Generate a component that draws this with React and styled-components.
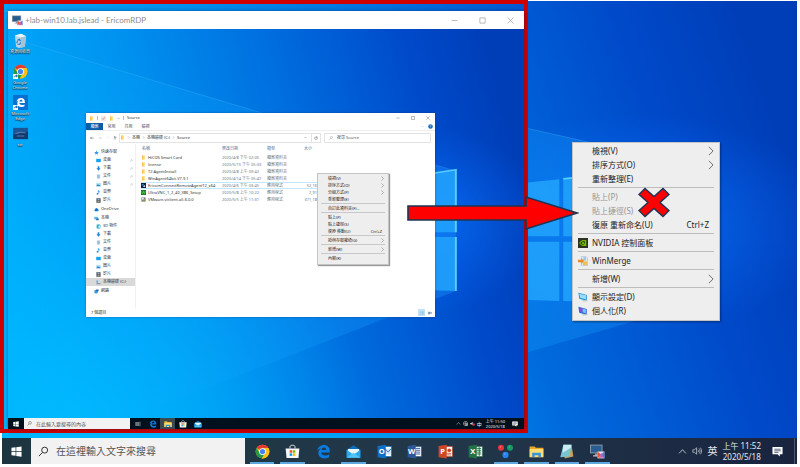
import React, { useId } from "react";
import styled, { createGlobalStyle, css } from "styled-components";

const files = [
  { icon: "folder", name: "HiCOS Smart Card", date: "2020/4/8 下午 02:05", type: "檔案資料夾", size: "" },
  { icon: "folder", name: "license", date: "2020/5/15 下午 05:33", type: "檔案資料夾", size: "" },
  { icon: "folder", name: "T2 AgentInstall", date: "2020/4/8 上午 09:42", type: "檔案資料夾", size: "" },
  { icon: "folder", name: "WinAgent64bit-V7.9.1", date: "2020/4/14 下午 05:47", type: "檔案資料夾", size: "" },
  { icon: "ericom", name: "EricomConnectRemoteAgentT2_x64", date: "2020/4/6 下午 03:45", type: "應用程式", size: "52,16", active: true },
  { icon: "vnc", name: "UltraVNC_1_2_40_X86_Setup", date: "2020/5/8 上午 10:22", type: "應用程式", size: "2,91" },
  { icon: "vmware", name: "VMware-viclient-all-6.0.0", date: "2020/5/5 上午 11:31", type: "應用程式", size: "371,18" },
];

const places = [
  [
    { icon: "star", name: "快速存取", root: true },
    { icon: "desktop", name: "桌面", pin: true },
    { icon: "download", name: "下載", pin: true },
    { icon: "doc", name: "文件", pin: true },
    { icon: "picture", name: "圖片", pin: true },
    { icon: "music", name: "音樂" },
    { icon: "video", name: "影片" },
  ],
  [{ icon: "cloud", name: "OneDrive", root: true }],
  [
    { icon: "pc", name: "本機", root: true },
    { icon: "cube", name: "3D 物件" },
    { icon: "download", name: "下載" },
    { icon: "doc", name: "文件" },
    { icon: "music", name: "音樂" },
    { icon: "desktop", name: "桌面" },
    { icon: "picture", name: "圖片" },
    { icon: "video", name: "影片" },
    { icon: "drive", name: "本機磁碟 (C:)", selected: true },
  ],
  [{ icon: "network", name: "網路", root: true }],
];

const folderMenu = [
  [{ text: "檢視(V)", sub: true }, { text: "排序方式(O)", sub: true }, { text: "分組方式(P)", sub: true }, { text: "重新整理(E)" }],
  [{ text: "自訂此資料夾(F)..." }],
  [{ text: "貼上(P)" }, { text: "貼上捷徑(S)" }, { text: "復原 移動(U)", keys: "Ctrl+Z" }],
  [{ text: "授與存取權給(G)", sub: true }],
  [{ text: "新增(W)", sub: true }],
  [{ text: "內容(R)" }],
];

const desktopMenu = [
  [{ text: "檢視(V)", sub: true }, { text: "排序方式(O)", sub: true }, { text: "重新整理(E)" }],
  [{ text: "貼上(P)", off: true }, { text: "貼上捷徑(S)", off: true }, { text: "復原 重新命名(U)", keys: "Ctrl+Z" }],
  [{ text: "NVIDIA 控制面板", icon: "nvidia" }],
  [{ text: "WinMerge", icon: "merge" }],
  [{ text: "新增(W)", sub: true }],
  [{ text: "顯示設定(D)", icon: "display" }, { text: "個人化(R)", icon: "personal" }],
];

const apps = [
  { icon: "chrome", open: true },
  { icon: "store", open: true },
  { icon: "edge" },
  { icon: "mail", open: true },
  { icon: "outlook" },
  { icon: "word" },
  { icon: "ppt" },
  { icon: "excel" },
  { icon: "dots", open: true },
  { icon: "explorer", open: true },
  { icon: "notepad", open: true },
  { icon: "rdp", open: true },
];

const shortcuts = [
  { icon: "bin", label: "資源回收筒" },
  { icon: "chromeLink", label: "Google Chrome" },
  { icon: "edgeLink", label: "Microsoft Edge" },
  { icon: "photo", label: "tst" },
];

const chrome = (
  <>
    <circle cx="12" cy="12" r="11" fill="#fbc116" />
    <path d="M12 12 2.5 6.5A11 11 0 0 1 21.5 6.5L12 7z" fill="#e33b2e" />
    <path d="M2.5 6.5A11 11 0 0 0 11 23l5-8.500-4 2.500-4.500-2.500z" fill="#279847" />
    <path d="M12 6.500h9.500A11 11 0 0 1 11 23l5.500-9z" fill="#fbc116" />
    <circle cx="12" cy="12" r="5.400" fill="#fff" />
    <circle cx="12" cy="12" r="4.200" fill="#4384f3" />
  </>
);
const edgeE = "M2 11C3 5 7 1.500 12.500 1.500c6 0 9.500 4 9.500 9.500v2.500H8.500c.3 3.500 3 4.800 6.500 4.800 2.300 0 4.300-.6 6-1.600v4.500c-2 1.200-4.400 1.800-7.200 1.800C7.500 23 3.700 19.500 3.700 14.500c0-3.200 1.600-5.800 4.300-7.300-2.600.4-4.600 1.700-6 3.800zm6.700-1.500h7.600c0-2.500-1.300-3.900-3.600-3.900-2.200 0-3.600 1.500-4 3.900z";
const linkBadge = (
  <>
    <path d="M0 16h8v8H0z" fill="#fff" />
    <path d="M2 22c0-3 1-4 3-4v-1.500L8 19l-3 2.500V20c-1.500 0-2 .5-3 2z" fill="#1767b8" />
  </>
);
const Office = ({ color, letter, children }) => (
  <>
    <path d="M12 4h11v16H12z" fill="#fff" stroke={color} />
    {children}
    <path d="M1 3 14 1v22L1 21z" fill={color} />
    <text x="7.500" y="16.500" textAnchor="middle" fontSize="12" fontWeight="700" fontFamily="Open Sans, sans-serif" fill="#fff">{letter}</text>
  </>
);

const art = {
  chrome,
  chromeLink: <>{chrome}{linkBadge}</>,
  edge: <path d={edgeE} fill="#0a7be0" />,
  edgeLink: (
    <>
      <path d="M0 0h24v24H0z" fill="#0870d0" />
      <path d={edgeE} fill="#fff" transform="translate(4.500 4) scale(.66)" />
      {linkBadge}
    </>
  ),
  store: (
    <>
      <path d="M8 7V4.500C8 3 9 2 12 2s4 1 4 2.500V7" fill="none" stroke="#eee" strokeWidth="1.500" />
      <path d="M1 7h22l-1.500 15.500h-19z" fill="#f7f7f7" />
      <path d="M7.500 10h4v4h-4z" fill="#f05022" />
      <path d="M12.500 10h4v4h-4z" fill="#7eb900" />
      <path d="M7.500 15h4v4h-4z" fill="#00a3ee" />
      <path d="M12.500 15h4v4h-4z" fill="#ffb800" />
    </>
  ),
  mail: (
    <>
      <path d="M1 9 12 2l11 7v13H1z" fill="#0a6dbd" />
      <path d="M3 8h18v9H3z" fill="#e9f6fd" />
      <path d="M1 9l11 8 11-8v13H1z" fill="#2aa8ea" />
      <path d="M1 22 12 14l11 8z" fill="#50c5f5" />
    </>
  ),
  outlook: (
    <Office color="#0e6fc4" letter="O">
      <path d="M13 7h9v10h-9z" fill="#d7e9f8" />
      <path d="m13 8 5 5 4-5" fill="none" stroke="#0e6fc4" strokeWidth="1.500" />
    </Office>
  ),
  word: (
    <Office color="#2b579a" letter="W">
      <path d="M14 7h7M14 10h7M14 13h7M14 16h7" stroke="#2b579a" strokeWidth="1.500" />
    </Office>
  ),
  ppt: (
    <Office color="#d04524" letter="P">
      <circle cx="18" cy="10" r="3" fill="#d04524" />
      <path d="M14 15h7M14 17.500h7" stroke="#d04524" strokeWidth="1.300" />
    </Office>
  ),
  excel: (
    <Office color="#217346" letter="X">
      <path d="M14 7h7M14 10h7M14 13h7M14 16h7M18 5v14" stroke="#217346" strokeWidth="1.500" />
    </Office>
  ),
  dots: (
    <>
      <circle cx="4.800" cy="6" r="4.800" fill="#e8323c" />
      <circle cx="19.200" cy="6" r="4.800" fill="#159a63" />
      <circle cx="12" cy="17.500" r="5" fill="#2684ee" />
      <circle cx="4" cy="4.800" r="1.300" fill="#ff7d7d" />
      <circle cx="18.400" cy="4.800" r="1.200" fill="#4cc795" />
      <circle cx="11.200" cy="16" r="1.300" fill="#6cb0ff" />
    </>
  ),
  explorer: (
    <>
      <path d="M1 4h8l2 2h12v15H1z" fill="#e9a924" />
      <path d="M1 8h22v13H1z" fill="#ffdc72" />
      <path d="M5 21v-7h14v7h-4v-3H9v3z" fill="#3c94d8" />
    </>
  ),
  notepad: (
    <>
      <path d="M8 2h12l3 18-14 3z" fill="#c7a259" />
      <path d="M7 1h13l-3 19-15 1z" fill="#7cc4d2" />
      <path d="M7 1h13l-1 5-13 8z" fill="#c9edf2" />
    </>
  ),
  rdp: (
    <>
      <path d="M0 1h20v14H0z" fill="#8d9aa5" />
      <path d="M1.500 2.500h17v11h-17z" fill="#2a5d8f" />
      <path d="M8 15h5v4H8z" fill="#8b969e" />
      <path d="M5 18h10v2H5z" fill="#c3cbd0" />
      <path d="M12 12h11v11H12z" fill="#e9e2ec" />
      <path d="M12 12l6 5-6 6z" fill="#e4572e" />
      <path d="M23 12l-6 5 6 6z" fill="#4f78d8" />
      <path d="M14 22l4-8 4 8z" fill="#c764b4" />
    </>
  ),
  bin: (
    <>
      <path d="M3 4 13 1l8 4-2 17-10 2-4-2z" fill="#c9dbe6" opacity=".9" />
      <path d="M3 4l9 3 9-2-8-4z" fill="#eef5f9" />
      <path d="M12 7l9-2-2 17-7 2z" fill="#a5c3d6" />
      <path d="M7 12l3-2 2 3M12 15l-1 3H7M6 16l1-3" fill="none" stroke="#1876d1" strokeWidth="1.800" />
    </>
  ),
  photo: (
    <>
      <path d="M0 3h24v18H0z" fill="#123a70" />
      <path d="M0 3h24v6L0 14z" fill="#1c5593" />
      <path d="M4 12l8-2 8 1M6 16h12" stroke="#6f90b8" strokeWidth="1.200" fill="none" />
    </>
  ),
  folder: (
    <>
      <path d="M6 2h12v20H6z" fill="#ffd866" />
      <path d="M6 2h4v20H6z" fill="#f1b93c" />
    </>
  ),
  ericom: (
    <>
      <path d="M0 0h24v24H0z" fill="#0c2340" />
      <path d="M4 5h9v7H4z" fill="#3c89cf" />
      <path d="M8 17l10-8 3 10z" fill="#d8e6f1" />
    </>
  ),
  vnc: (
    <>
      <path d="M0 0h24v24H0z" fill="#1f7a2d" />
      <path d="M4 6l4 12 4-12 4 12 4-12" stroke="#5cd54e" strokeWidth="3" fill="none" />
    </>
  ),
  vmware: (
    <>
      <path d="M2 2h20v20H2z" fill="#6b7b88" />
      <path d="M5 4h9v9H5z" fill="#e3e8ec" />
      <path d="M9 10h11v11H9z" fill="#d9b13a" />
      <path d="M12 13h6v5h-6z" fill="#3970a5" />
    </>
  ),
  star: <path d="M12 2l3 7 8 1-6 5 2 8-7-4-7 4 2-8-6-5 8-1z" fill="#2f9bea" />,
  desktop: <path d="M1 4h22v16H1z" fill="#18a0f3" />,
  download: <path d="M8 1h8v10h6L12 23 2 11h6z" fill="#2387d8" />,
  doc: (
    <>
      <path d="M4 1h16v22H4z" fill="#c9d9e5" />
      <path d="M7 7h10M7 12h10M7 17h10" stroke="#4a90c4" strokeWidth="2" />
    </>
  ),
  picture: (
    <>
      <path d="M1 4h22v16H1z" fill="#b7dff5" />
      <path d="M1 20l8-10 6 6 3-3 5 7z" fill="#2a86cc" />
    </>
  ),
  music: <path d="M9 1h3c1 5 7 5 7 11h-3c0-3-2-4-4-5v11c0 6-9 6-9 1 0-4 4-5 6-4z" fill="#1b8fe6" />,
  video: (
    <>
      <path d="M2 1h20v22H2z" fill="#44505e" />
      <path d="M7 3h10v8H7z" fill="#8fa9c9" />
      <path d="M7 13h10v8H7z" fill="#b69f73" />
    </>
  ),
  cloud: <path d="M5 20a5 5 0 0 1 0-9 7 7 0 0 1 13-2 6 6 0 0 1 1 11z" fill="#0f78d4" />,
  pc: (
    <>
      <path d="M1 4h18v12H1z" fill="#57b8ef" />
      <path d="M12 12h11v8H9z" fill="#2b74ae" />
    </>
  ),
  cube: (
    <>
      <path d="M3 4l9-3 9 3v16l-9 3-9-3z" fill="#22b3c4" />
      <path d="M12 8l7-2v11l-7 3z" fill="#dff7fa" />
    </>
  ),
  drive: (
    <>
      <path d="M2 3h8v9H2z" fill="#35a9ea" />
      <path d="M2 16h20v4H2z" fill="#6b7680" />
    </>
  ),
  network: (
    <>
      <circle cx="10" cy="13" r="9" fill="#3a9ad9" />
      <path d="M11 2h11v9H11z" fill="#1f6eb0" />
    </>
  ),
  nvidia: (
    <>
      <path d="M0 0h24v24H0z" fill="#2c3325" />
      <path d="M3 12c3-6 8-7 11-7h6v14h-7c-4 0-8-3-10-7z" fill="#76b900" />
      <path d="M6 12c2-4 6-5 10-4 1 3 0 7-4 8-3 0-5-2-6-4z" fill="#22300f" />
      <circle cx="12" cy="12" r="2.500" fill="#8ad100" />
    </>
  ),
  merge: (
    <>
      <path d="M8 1h11l4 4v18H8z" fill="#dcebf6" stroke="#7ba7c8" />
      <path d="M13 3h6v8h-6z" fill="#9cc3e0" />
      <path d="M0 9h8V5l7 7-7 7v-4H0z" fill="#e98a2b" />
      <path d="M12 13h10v9H12z" fill="#f2c14c" />
    </>
  ),
  display: (
    <>
      <path d="M1 2l20 5v14L3 16z" fill="#1f8fd0" />
      <path d="M3 4l16 4v10L5 14z" fill="#9bdcfa" />
      <path d="M9 20l13-1 1 3-10 1z" fill="#b8c6d0" />
    </>
  ),
  personal: (
    <>
      <path d="M1 2l20 5v14L3 16z" fill="#2a63d4" />
      <path d="M3 4l8 2v9l-6-1z" fill="#8a4be0" />
      <path d="M11 6l8 2v10l-8-3z" fill="#6fc3f6" />
      <path d="M9 20l13-1 1 3-10 1z" fill="#b8c6d0" />
    </>
  ),
  windows: <path d="M1 4l9-1.300v8.800H1zM11.500 2.500 23 1v10.500H11.500zM1 13h9v8.500L1 20.200zM11.500 13H23v10.300l-11.500-1.600z" fill="#fff" />,
  taskview: <path d="M3 4v3h12V4M3 20v-3h12v3M3 9h12v6H3zM20 3v18" fill="none" stroke="#ddd" strokeWidth="2" />,
  search: <path d="M21 9A6.500 6.500 0 1 1 8 9a6.500 6.500 0 0 1 13 0zM10 14 2 22" fill="none" stroke="currentColor" strokeWidth="2" />,
  up: <path d="M3 17l9-10 9 10" fill="none" stroke="currentColor" strokeWidth="2" />,
  down: <path d="M4 8l8 8 8-8" fill="none" stroke="currentColor" strokeWidth="2.500" />,
  right: <path d="M7 2l10 10L7 22" fill="none" stroke="currentColor" strokeWidth="2" />,
  goBack: <path d="M22 12H3M10 5l-7 7 7 7" fill="none" stroke="currentColor" strokeWidth="2.500" />,
  goNext: <path d="M2 12h19M14 5l7 7-7 7" fill="none" stroke="currentColor" strokeWidth="2.500" />,
  goUp: <path d="M12 22V3M5 10l7-7 7 7" fill="none" stroke="currentColor" strokeWidth="3" />,
  refresh: <path d="M18 7a8 8 0 1 1-9-2M17 1v7h-7" fill="none" stroke="currentColor" strokeWidth="2.500" />,
  speaker: <path d="M2 9h4l5-5v16l-5-5H2zM14 9c2 2 2 4 0 6M17 6c3 4 3 8 0 12M20 4c4 5 4 11 0 16" fill="none" stroke="currentColor" strokeWidth="1.500" />,
  mute: (
    <>
      <path d="M1 9h5l7-6v18l-7-6H1z" fill="#ccc" />
      <circle cx="18" cy="17" r="6" fill="#dc2f2f" />
    </>
  ),
  globe: (
    <>
      <circle cx="12" cy="12" r="10" fill="none" stroke="#ddd" strokeWidth="2.500" />
      <path d="M2 12h20M12 2v20M14 14h9v8h-9z" stroke="#ddd" strokeWidth="2" fill="#777" />
    </>
  ),
  note: (
    <>
      <path d="M1 2h22v16h-6v5l-5-5H1z" fill="#fff" />
      <path d="M5 7h14M5 10.500h14M5 14h9" stroke="#1b2a44" strokeWidth="1.500" />
    </>
  ),
  min: <path d="M2 12h20" stroke="currentColor" strokeWidth="2" />,
  max: <path d="M3 3h18v18H3z" fill="none" stroke="currentColor" strokeWidth="2" />,
  close: <path d="M2 2l20 20M22 2 2 22" stroke="currentColor" strokeWidth="2" />,
  pin: <path d="M13 3l8 8-4 1-4 5-6-6 5-4zM9 15l-6 6" fill="none" stroke="currentColor" strokeWidth="2" />,
  props: (
    <>
      <path d="M2 2h20v20H2z" fill="#f2eeee" stroke="#bbb" />
      <path d="M6 12l4 5 8-11" fill="none" stroke="#e2593f" strokeWidth="3" />
    </>
  ),
  help: (
    <>
      <circle cx="12" cy="12" r="11" fill="#0f6fc6" />
      <path d="M9 9c0-4 6-4 6 0 0 2-3 2-3 5M12 17v2" stroke="#fff" strokeWidth="2" fill="none" />
    </>
  ),
  details: <path d="M2 5h6M2 12h6M2 19h6M11 5h11M11 12h11M11 19h11" stroke="#6a9cb8" strokeWidth="3" />,
  tiles: <path d="M1 5h12v14H1zM15 6h8v4h-8zM15 14h8v4h-8z" fill="#6f93b4" />,
};

const Icon = ({ name, size }) => (
  <Glyph viewBox="0 0 24 24" $size={size} aria-hidden="true">
    {art[name]}
  </Glyph>
);

function Wallpaper() {
  const id = useId();
  return (
    <Scene viewBox="0 0 1000 1000" preserveAspectRatio="none" aria-hidden="true">
      <defs>
        <linearGradient id={`${id}sky`} x1="0" y1="0.6" x2="1" y2="0.4">
          <stop offset="0" stopColor="#00aefc" />
          <stop offset="0.3" stopColor="#0094f0" />
          <stop offset="0.58" stopColor="#0070e0" />
          <stop offset="0.85" stopColor="#004aca" />
          <stop offset="1" stopColor="#003eb8" />
        </linearGradient>
        <linearGradient id={`${id}beam`} x1="0" y1="0" x2="1" y2="0">
          <stop offset="0" stopColor="#00b4ff" stopOpacity="0.1" />
          <stop offset="1" stopColor="#1a98ff" stopOpacity="0.35" />
        </linearGradient>
        <radialGradient id={`${id}glow`} cx="0.8" cy="0.48" r="0.24">
          <stop offset="0" stopColor="#0a7cff" stopOpacity="0.7" />
          <stop offset="1" stopColor="#0a6cff" stopOpacity="0" />
        </radialGradient>
        <radialGradient id={`${id}low`} cx="0.1" cy="1" r="0.6">
          <stop offset="0" stopColor="#00bcff" stopOpacity="0.9" />
          <stop offset="1" stopColor="#00b4ff" stopOpacity="0" />
        </radialGradient>
      </defs>
      <path d="M0 0h1000v1000H0z" fill={`url(#${id}sky)`} />
      <path d="M0 0h1000v1000H0z" fill={`url(#${id}low)`} />
      <path d="M0 0h1000v1000H0z" fill={`url(#${id}glow)`} />
      <path d="M0 20 868 355V655L0 1090z" fill={`url(#${id}beam)`} />
      <path d="M0 20 868 355" stroke="#4dbdff" strokeOpacity="0.3" strokeWidth="2" />
      <path d="M560 410 701 385V508H560zM706 384 868 352V508H706zM560 520H701V648L560 640zM706 520H868V655L706 648z" fill="#26aaff" opacity="0.75" />
      <path d="M706 384 868 352V508M868 520V655" fill="none" stroke="#62dcff" strokeWidth="4" opacity="0.8" />
    </Scene>
  );
}

const Menu = ({ groups, compact, label }) => (
  <MenuBox role="menu" aria-label={label} $compact={compact}>
    {groups.map((group, i) => (
      <React.Fragment key={i}>
        {i > 0 && <MenuLine $compact={compact} />}
        {group.map((item) => (
          <MenuItem key={item.text} role="menuitem" disabled={item.off} $compact={compact}>
            <MenuIcon>{item.icon && <Icon name={item.icon} size={10} />}</MenuIcon>
            <span>{item.text}</span>
            {item.keys && <MenuKeys $compact={compact}>{item.keys}</MenuKeys>}
            {item.sub && <MenuArrow><Icon name="right" size={compact ? 5 : 10} /></MenuArrow>}
          </MenuItem>
        ))}
      </React.Fragment>
    ))}
  </MenuBox>
);

const Explorer = () => (
  <ExplorerWindow>
    <ExplorerTitle>
      <Icon name="folder" size={5} />
      <Divider />
      <Icon name="props" size={5} />
      <Icon name="folder" size={5} />
      <Icon name="down" size={3} />
      <Divider />
      <span>Source</span>
      <WindowButtons $gap={11}>
        <IconButton aria-label="最小化"><Icon name="min" size={4} /></IconButton>
        <IconButton aria-label="最大化"><Icon name="max" size={4} /></IconButton>
        <IconButton aria-label="關閉"><Icon name="close" size={4} /></IconButton>
      </WindowButtons>
    </ExplorerTitle>
    <Tabs>
      <Tab $active>檔案</Tab>
      <Tab>常用</Tab>
      <Tab>共用</Tab>
      <Tab>檢視</Tab>
      <TabsEnd>
        <Icon name="down" size={3} />
        <Icon name="help" size={5} />
      </TabsEnd>
    </Tabs>
    <AddressRow>
      <NavButtons>
        <IconButton aria-label="上一頁"><Icon name="goBack" size={4} /></IconButton>
        <IconButton aria-label="下一頁" $faint><Icon name="goNext" size={4} /></IconButton>
        <IconButton aria-label="最近" $faint><Icon name="down" size={3} /></IconButton>
        <IconButton aria-label="上移"><Icon name="goUp" size={4} /></IconButton>
      </NavButtons>
      <Address>
        <Icon name="folder" size={5} />
        <Icon name="right" size={3} />
        <Crumb>本機</Crumb>
        <Icon name="right" size={3} />
        <Crumb>本機磁碟 (C:)</Crumb>
        <Icon name="right" size={3} />
        <Crumb>Source</Crumb>
        <AddressEnd><Icon name="down" size={3} /></AddressEnd>
        <Refresh aria-label="重新整理"><Icon name="refresh" size={4} /></Refresh>
      </Address>
      <FolderSearch>
        <Icon name="search" size={4} />
        <SearchInput aria-label="搜尋 Source" placeholder="搜尋 Source" $size={4} />
      </FolderSearch>
    </AddressRow>
    <ExplorerBody>
      <Sidebar>
        {places.map((group, i) => (
          <div key={i}>
            {group.map((place) => (
              <Place key={place.name} $root={place.root} $selected={place.selected}>
                <Icon name={place.icon} size={5} />
                <span>{place.name}</span>
                {place.pin && <Pin><Icon name="pin" size={3} /></Pin>}
              </Place>
            ))}
          </div>
        ))}
      </Sidebar>
      <FileTable>
        <colgroup>
          <col width="81" />
          <col width="45" />
          <col width="37" />
          <col width="25" />
          <col />
        </colgroup>
        <thead>
          <tr>
            <th>名稱</th>
            <th>修改日期</th>
            <th>類型</th>
            <th>大小</th>
            <th />
          </tr>
        </thead>
        <tbody>
          {files.map((file) => (
            <FileRow key={file.name} $active={file.active}>
              <td>
                <FileName>
                  <Icon name={file.icon} size={5} />
                  {file.name}
                </FileName>
              </td>
              <td>{file.date}</td>
              <td>{file.type}</td>
              <SizeCell>{file.size}</SizeCell>
              <td />
            </FileRow>
          ))}
        </tbody>
      </FileTable>
    </ExplorerBody>
    <StatusBar>
      <span>7 個項目</span>
      <ViewSwitch>
        <ViewButton aria-label="詳細資料" $active><Icon name="details" size={4} /></ViewButton>
        <ViewButton aria-label="圖示"><Icon name="tiles" size={4} /></ViewButton>
      </ViewSwitch>
    </StatusBar>
    <FolderMenuSpot>
      <Menu groups={folderMenu} compact label="資料夾功能表" />
    </FolderMenuSpot>
  </ExplorerWindow>
);

const RemoteTaskbar = () => (
  <RemoteBar>
    <RemoteStart aria-label="開始"><Icon name="windows" size={6} /></RemoteStart>
    <RemoteSearch>
      <Icon name="search" size={5} />
      <SearchInput aria-label="搜尋" placeholder="在此輸入要搜尋的內容" $size={5} />
    </RemoteSearch>
    <RemoteApps>
      {["taskview", "edge", "explorer", "store", "mail"].map((name) => (
        <RemoteApp key={name} aria-label={name} $active={name === "explorer"}>
          <Icon name={name} size={name === "taskview" ? 6 : 8} />
        </RemoteApp>
      ))}
    </RemoteApps>
    <RemoteTray>
      <Icon name="up" size={5} />
      <Icon name="globe" size={5} />
      <Icon name="mute" size={5} />
      <span>中</span>
      <RemoteClock>
        <span>上午 11:50</span>
        <span>2020/5/18</span>
      </RemoteClock>
      <Icon name="note" size={6} />
    </RemoteTray>
  </RemoteBar>
);

export default function App() {
  return (
    <Page>
      <GlobalStyle />
      <Desktop>
        <Wallpaper />
        <DesktopArea />
        <Taskbar>
          <StartButton aria-label="開始"><Icon name="windows" size={11} /></StartButton>
          <TaskSearch>
            <Icon name="search" size={11} />
            <SearchInput aria-label="搜尋" placeholder="在這裡輸入文字來搜尋" $size={10} />
          </TaskSearch>
          <Apps>
            {apps.map((app) => (
              <AppButton key={app.icon} aria-label={app.icon} $open={app.open}>
                <Icon name={app.icon} size={15} />
              </AppButton>
            ))}
          </Apps>
          <Tray>
            <Icon name="up" size={9} />
            <Icon name="speaker" size={10} />
            <Lang>英</Lang>
            <Clock>
              <span>上午 11:52</span>
              <span>2020/5/18</span>
            </Clock>
            <Icon name="note" size={11} />
          </Tray>
          <ShowDesktop aria-label="顯示桌面" />
        </Taskbar>
      </Desktop>
      <Frame>
        <RemoteWindow>
          <RemoteTitle>
            <Icon name="rdp" size={11} />
            <span>+lab-win10.lab.jslead - EricomRDP</span>
            <WindowButtons $gap={21}>
              <IconButton aria-label="最小化"><Icon name="min" size={7} /></IconButton>
              <IconButton aria-label="最大化"><Icon name="max" size={7} /></IconButton>
              <IconButton aria-label="關閉"><Icon name="close" size={7} /></IconButton>
            </WindowButtons>
          </RemoteTitle>
          <RemoteScreen>
            <Wallpaper />
            <Shortcuts>
              {shortcuts.map((item) => (
                <Shortcut key={item.icon}>
                  <Icon name={item.icon} size={15} />
                  <span>{item.label}</span>
                </Shortcut>
              ))}
            </Shortcuts>
            <Explorer />
            <RemoteTaskbar />
          </RemoteScreen>
        </RemoteWindow>
      </Frame>
      <DesktopMenuSpot>
        <Menu groups={desktopMenu} label="桌面功能表" />
        <Cross viewBox="0 0 32 30" aria-hidden="true">
          <path d="M7 1 16 9 25 1 31 7 22 15 31 23 25 29 16 21 7 29 1 23 10 15 1 7z" />
        </Cross>
      </DesktopMenuSpot>
      <Arrow viewBox="0 0 172 36" aria-hidden="true">
        <path d="M1 11H119V2L170 18 119 34V25H1z" />
      </Arrow>
    </Page>
  );
}

const GlobalStyle = createGlobalStyle`
  * {
    box-sizing: border-box;
  }
  body {
    margin: 0;
    background: #fff;
    font-family: "Noto Sans", "Noto Sans CJK TC", sans-serif;
  }
  button, input {
    font: inherit;
    color: inherit;
    padding: 0;
    border: 0;
    background: none;
  }
`;

const Glyph = styled.svg`
  display: block;
  flex: none;
  width: ${(p) => p.$size}px;
  height: ${(p) => p.$size}px;
`;

const Scene = styled.svg`
  position: absolute;
  inset: 0;
  width: 100%;
  height: 100%;
  z-index: -1;
`;

const Page = styled.div`
  position: relative;
  height: 100vh;
  padding: 1px 3px 3px 2px;
  overflow: hidden;
`;

const Desktop = styled.main`
  position: relative;
  isolation: isolate;
  display: flex;
  flex-direction: column;
  height: 100%;
`;

const DesktopArea = styled.div`
  flex: 1;
`;

const Frame = styled.section`
  position: absolute;
  top: 0;
  left: 0;
  bottom: 34px;
  width: 66%;
  padding: 7px 0 0 4px;
  border: 4px solid #d00000;
`;

const RemoteWindow = styled.div`
  display: flex;
  flex-direction: column;
  height: 100%;
  box-shadow: 0 0 4px rgba(0, 30, 80, 0.5);
`;

const RemoteTitle = styled.header`
  display: flex;
  align-items: center;
  gap: 2px;
  height: 18px;
  padding: 0 10px 0 4px;
  background: #fff;
  color: #8c8c8c;
  font-family: Lato, "Noto Sans CJK TC", sans-serif;
  font-size: 8px;
  line-height: 10px;
`;

const WindowButtons = styled.div`
  display: flex;
  align-items: center;
  gap: ${(p) => p.$gap}px;
  margin-left: auto;
`;

const IconButton = styled.button`
  display: flex;
  color: ${(p) => (p.$faint ? "#bbb" : "inherit")};
`;

const RemoteScreen = styled.div`
  position: relative;
  isolation: isolate;
  display: flex;
  flex: 1;
  flex-direction: column;
  overflow: hidden;
`;

const Shortcuts = styled.nav`
  display: flex;
  flex: 1;
  flex-direction: column;
  width: 24px;
  padding-top: 4px;
`;

const Shortcut = styled.button`
  display: flex;
  flex-direction: column;
  align-items: center;
  gap: 1px;
  height: 31px;
  color: #fff;
  font-size: 4px;
  line-height: 5px;
  text-align: center;
  text-shadow: 0 1px 1px #000, 0 0 1px #000;
`;

const ExplorerWindow = styled.section`
  position: absolute;
  top: 84px;
  left: 78px;
  right: 89px;
  display: flex;
  flex-direction: column;
  background: #fff;
  color: #333;
  font-size: 4px;
  line-height: 6px;
  box-shadow: 0 0 2px rgba(0, 40, 100, 0.5);
`;

const ExplorerTitle = styled.header`
  display: flex;
  align-items: center;
  gap: 3px;
  height: 10px;
  padding: 0 5px 0 3px;
`;

const Divider = styled.i`
  width: 1px;
  height: 4px;
  background: #bbb;
`;

const Tabs = styled.div`
  display: flex;
  height: 8px;
  border-bottom: 1px solid #eee;
`;

const Tab = styled.button`
  width: 17px;
  background: ${(p) => (p.$active ? "#0a5ba8" : "#fff")};
  color: ${(p) => (p.$active ? "#fff" : "#444")};
`;

const TabsEnd = styled.div`
  display: flex;
  align-items: center;
  gap: 4px;
  margin-left: auto;
  padding-right: 2px;
  color: #999;
`;

const AddressRow = styled.div`
  display: flex;
  align-items: center;
  gap: 3px;
  height: 13px;
  padding-right: 4px;
`;

const NavButtons = styled.div`
  display: flex;
  align-items: center;
  gap: 4px;
  width: 30px;
  padding-left: 4px;
`;

const Address = styled.div`
  display: flex;
  flex: 1;
  align-items: center;
  gap: 2px;
  height: 10px;
  border: 1px solid #e4e4e4;
`;

const Crumb = styled.button`
  line-height: 6px;
`;

const AddressEnd = styled.div`
  margin-left: auto;
  padding-right: 2px;
`;

const Refresh = styled.button`
  display: flex;
  align-items: center;
  height: 8px;
  padding: 0 2px;
  border-left: 1px solid #e4e4e4;
`;

const FolderSearch = styled.div`
  display: flex;
  width: 31%;
  align-items: center;
  gap: 4px;
  height: 10px;
  padding: 0 4px;
  border: 1px solid #e4e4e4;
  color: #777;
`;

const SearchInput = styled.input`
  flex: 1;
  min-width: 0;
  font-size: ${(p) => p.$size}px;
  line-height: normal;
  outline: 0;
  &::placeholder {
    color: #555;
    opacity: 1;
  }
`;

const ExplorerBody = styled.div`
  display: flex;
  align-items: flex-start;
  min-height: 164px;
`;

const Sidebar = styled.nav`
  display: flex;
  flex: none;
  flex-direction: column;
  gap: 1px;
  width: 50px;
  min-height: 164px;
  padding-top: 4px;
  border-right: 1px solid #f0f0f0;
`;

const Place = styled.button`
  display: flex;
  align-items: center;
  gap: 2px;
  width: 100%;
  height: 8px;
  padding-left: ${(p) => (p.$root ? 8 : 10)}px;
  background: ${(p) => (p.$selected ? "#d9d9d9" : "transparent")};
`;

const Pin = styled.span`
  margin-left: auto;
  padding-right: 2px;
  color: #678;
`;

const FileTable = styled.table`
  flex: 1;
  table-layout: fixed;
  margin-left: 5px;
  border-collapse: collapse;
  th,
  td {
    height: 7px;
    padding: 0;
    overflow: hidden;
    text-align: left;
    white-space: nowrap;
    line-height: 6px;
  }
  th {
    height: 10px;
    color: #52759c;
    font-weight: 400;
  }
  td {
    color: #777;
  }
  td:first-child {
    color: #333;
  }
  th:first-child {
    padding-left: 1px;
  }
`;

const FileRow = styled.tr`
  ${(p) =>
    p.$active &&
    css`
      td:not(:last-child) {
        box-shadow: inset 0 1px #c3e6fa, inset 0 -1px #c3e6fa;
      }
    `}
`;

const FileName = styled.div`
  display: flex;
  align-items: center;
  gap: 2px;
`;

const SizeCell = styled.td`
  && {
    padding-right: 12px;
    direction: rtl;
    text-align: right;
    overflow: visible;
  }
`;

const StatusBar = styled.footer`
  display: flex;
  align-items: center;
  height: 9px;
  padding: 0 2px 0 5px;
`;

const ViewSwitch = styled.div`
  display: flex;
  gap: 1px;
  margin-left: auto;
`;

const ViewButton = styled.button`
  display: flex;
  align-items: center;
  justify-content: center;
  width: 7px;
  height: 7px;
  background: ${(p) => (p.$active ? "#bce4f8" : "transparent")};
`;

const FolderMenuSpot = styled.div`
  position: absolute;
  top: 60px;
  right: 46px;
  width: 72px;
`;

const DesktopMenuSpot = styled.div`
  position: absolute;
  top: 142px;
  right: 80px;
  width: 148px;
`;

const MenuBox = styled.div`
  display: flex;
  flex-direction: column;
  padding: 1px 2px 2px;
  border: 1px solid #c4c4c4;
  background: #eee;
  color: #222;
  font-size: ${(p) => (p.$compact ? 4 : 8)}px;
  box-shadow: ${(p) => (p.$compact ? "1px 1px 1px" : "1px 1px 2px")} rgba(0, 0, 0, 0.4);
`;

const MenuItem = styled.button`
  display: grid;
  grid-template-columns: ${(p) => (p.$compact ? 8 : 17)}px 1fr auto;
  align-items: center;
  height: ${(p) => (p.$compact ? 7 : 14)}px;
  line-height: ${(p) => (p.$compact ? 6 : 12)}px;
  text-align: left;
  white-space: nowrap;
  &:disabled {
    color: #969696;
  }
`;

const MenuIcon = styled.span`
  padding-left: 3px;
`;

const MenuKeys = styled.span`
  padding-right: ${(p) => (p.$compact ? 4 : 8)}px;
`;

const MenuArrow = styled.span`
  padding-right: 1px;
  color: #555;
`;

const MenuLine = styled.hr`
  width: auto;
  height: 1px;
  margin: ${(p) => (p.$compact ? "0 1px 1px" : "1px 3px 2px")};
  border: 0;
  background: ${(p) => (p.$compact ? "#c8c8c8" : "#bdbdbd")};
`;

const Cross = styled.svg`
  position: absolute;
  top: 45px;
  left: 66px;
  width: 32px;
  height: 31px;
  fill: #f00;
  stroke: #1c3553;
  stroke-width: 1.4;
`;

const Arrow = styled.svg`
  position: absolute;
  top: 195px;
  left: calc(66% - 121px);
  width: 172px;
  height: 36px;
  fill: #f00;
  stroke: #1c3553;
  stroke-width: 1.6;
`;

const RemoteBar = styled.footer`
  display: flex;
  align-items: center;
  height: 11px;
  background: #00111d;
  color: #eee;
`;

const RemoteStart = styled.button`
  display: flex;
  justify-content: center;
  width: 16px;
`;

const RemoteSearch = styled.div`
  display: flex;
  align-items: center;
  gap: 4px;
  width: 106px;
  height: 100%;
  padding: 0 3px;
  background: #f2f2f2;
  color: #333;
`;

const RemoteApps = styled.div`
  display: flex;
  height: 100%;
`;

const RemoteApp = styled.button`
  display: flex;
  align-items: center;
  justify-content: center;
  width: 15px;
  background: ${(p) => (p.$active ? "#3a4a52" : "transparent")};
`;

const RemoteTray = styled.div`
  display: flex;
  align-items: center;
  gap: 2px;
  margin-left: auto;
  padding-right: 6px;
  font-size: 5px;
  line-height: 6px;
`;

const RemoteClock = styled.div`
  display: flex;
  flex-direction: column;
  align-items: center;
  padding: 0 5px 0 2px;
  font-size: 4px;
  line-height: 5px;
`;

const Taskbar = styled.footer`
  display: flex;
  align-items: center;
  height: 26px;
  background: linear-gradient(90deg, #1d3540, #22384a 55%, #19243f);
  color: #e6e9ee;
`;

const StartButton = styled.button`
  display: flex;
  justify-content: center;
  width: 29px;
`;

const TaskSearch = styled.div`
  display: flex;
  align-items: center;
  gap: 7px;
  width: 214px;
  height: 100%;
  padding: 0 7px;
  background: #f2f2f2;
  color: #222;
`;

const Apps = styled.div`
  display: flex;
  width: 46%;
  height: 100%;
  margin-left: 2px;
`;

const AppButton = styled.button`
  display: flex;
  flex: 1;
  align-items: center;
  justify-content: center;
  margin: 0 3px;
  border: solid transparent;
  border-width: 2px 0;
  border-bottom-color: ${(p) => (p.$open ? "#5fa8e0" : "transparent")};
`;

const Tray = styled.div`
  display: flex;
  align-items: center;
  gap: 5px;
  margin-left: auto;
  padding-right: 11px;
`;

const Lang = styled.span`
  font-size: 10px;
  line-height: 12px;
`;

const Clock = styled.div`
  display: flex;
  flex-direction: column;
  align-items: center;
  padding-right: 6px;
  font-size: 8px;
  line-height: 11px;
`;

const ShowDesktop = styled.button`
  width: 3px;
  height: 100%;
  border-left: 1px solid #4b556b;
`;
